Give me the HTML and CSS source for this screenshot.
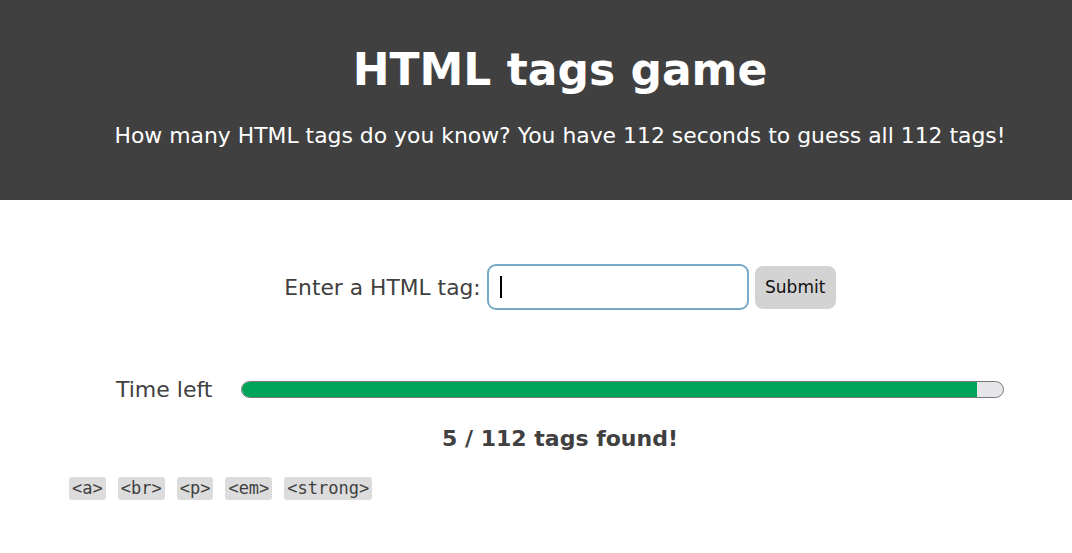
FILE: index.html
```html
<!DOCTYPE html>
<html>
<head>
<meta charset="utf-8">
<link rel="stylesheet" href="styles.css">
</head>
<body>
<header class="hero">
  <div class="wrap">
    <h1 class="title">HTML tags game</h1>
    <p class="subtitle">How many HTML tags do you know? You have 112 seconds to guess all 112 tags!</p>
  </div>
</header>
<main class="wrap main">
  <form class="entry">
    <label class="entry-label" for="tag">Enter a HTML tag:</label>
    <span class="input-box"><span class="caret"></span></span>
    <button class="submit" type="button">Submit</button>
  </form>
  <div class="timer">
    <span class="timer-label">Time left</span>
    <div class="bar"><div class="fill" style="width:96.6%"></div></div>
  </div>
  <p class="count">5 / 112 tags found!</p>
  <ul class="tags">
    <li><code>&lt;a&gt;</code></li>
    <li><code>&lt;br&gt;</code></li>
    <li><code>&lt;p&gt;</code></li>
    <li><code>&lt;em&gt;</code></li>
    <li><code>&lt;strong&gt;</code></li>
  </ul>
</main>
</body>
</html>
```
FILE: styles.css
```css
* { box-sizing: border-box; }
body {
  margin: 0;
  font-family: "DejaVu Sans", sans-serif;
  color: #404040;
  background: #fff;
}
.wrap {
  padding-left: 69px;
  padding-right: 21px;
}
.hero {
  background: #404040;
  color: #fff;
  height: 200px;
  text-align: center;
}
.hero .wrap { padding-top: 42px; }
.title {
  margin: 0;
  font-size: 44px;
  font-weight: bold;
  line-height: 56px;
}
.subtitle {
  margin: 25px 0 0;
  font-size: 21.9px;
  line-height: 26px;
}
.main { padding-top: 64px; }
.entry {
  display: flex;
  justify-content: center;
  align-items: center;
  gap: 6px;
  margin: 0;
}
.entry-label {
  font-size: 21.8px;
}
.input-box {
  width: 262px;
  height: 46px;
  border: 2px solid #78a8c8;
  border-radius: 9px;
  display: flex;
  align-items: center;
  padding-left: 11px;
}
.caret {
  width: 2px;
  height: 22px;
  background: #000;
}
.submit {
  width: 81px;
  height: 43px;
  border: none;
  border-radius: 8px;
  background: #d3d3d3;
  color: #111;
  font-family: "DejaVu Sans", sans-serif;
  font-size: 17px;
  padding: 0;
}
.timer {
  display: flex;
  align-items: center;
  margin: 67px 47px 0;
  gap: 29px;
}
.timer-label {
  font-size: 22px;
  white-space: nowrap;
}
.bar {
  flex: 1;
  height: 17px;
  border: 1px solid #777;
  border-radius: 9px;
  background: #e6e6ea;
  overflow: hidden;
}
.fill {
  height: 100%;
  background: #00a55a;
}
.count {
  text-align: center;
  font-weight: bold;
  font-size: 22px;
  line-height: 26px;
  margin: 24px 0 0;
}
.tags {
  list-style: none;
  margin: 25px 0 0;
  padding: 0;
  display: flex;
  gap: 12px;
}
.tags code {
  display: block;
  background: #dcdcdc;
  border-radius: 3px;
  padding: 2px 3px;
  font-family: "DejaVu Sans Mono", monospace;
  font-size: 17px;
  line-height: 19px;
  color: #404040;
}
```
